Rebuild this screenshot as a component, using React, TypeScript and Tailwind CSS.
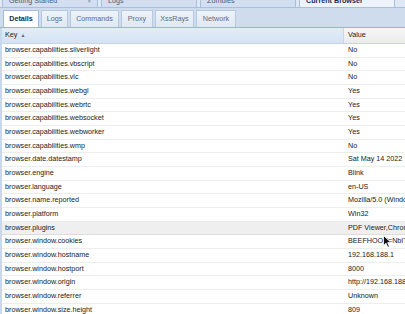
import { ReactNode } from "react";

const outerTabs = [
  { label: "Getting Started", active: false, closable: true },
  { label: "Logs", active: false, closable: false },
  { label: "Zombies", active: false, closable: false },
  { label: "Current Browser", active: true, closable: false },
];

const innerTabs = [
  { label: "Details", w: "w-[36px]" },
  { label: "Logs", w: "w-[27px]" },
  { label: "Commands", w: "w-[49px]" },
  { label: "Proxy", w: "w-[32px]" },
  { label: "XssRays", w: "w-[39px]" },
  { label: "Network", w: "w-[40px]" },
];

const rows: [string, string][] = [
  ["browser.capabilities.silverlight", "No"],
  ["browser.capabilities.vbscript", "No"],
  ["browser.capabilities.vlc", "No"],
  ["browser.capabilities.webgl", "Yes"],
  ["browser.capabilities.webrtc", "Yes"],
  ["browser.capabilities.websocket", "Yes"],
  ["browser.capabilities.webworker", "Yes"],
  ["browser.capabilities.wmp", "No"],
  ["browser.date.datestamp", "Sat May 14 2022 12:41:08 GMT+0200"],
  ["browser.engine", "Blink"],
  ["browser.language", "en-US"],
  ["browser.name.reported", "Mozilla/5.0 (Windows NT 10.0; Win64; x64)"],
  ["browser.platform", "Win32"],
  ["browser.plugins", "PDF Viewer,Chrome PDF Viewer"],
  ["browser.window.cookies", "BEEFHOOK=NbITq8xW"],
  ["browser.window.hostname", "192.168.188.1"],
  ["browser.window.hostport", "8000"],
  ["browser.window.origin", "http://192.168.188.1:8000"],
  ["browser.window.referrer", "Unknown"],
  ["browser.window.size.height", "809"],
];

const Cell = ({ children, className }: { children: ReactNode; className?: string }) => (
  <div className={`flex items-center overflow-hidden whitespace-nowrap ${className ?? ""}`}>{children}</div>
);

export default function App() {
  return (
    <div className="relative h-[314px] w-[405px] overflow-hidden bg-white font-['Liberation_Sans',Arial,sans-serif] text-[7.2px] text-[#222]">
      {/* outer tab bar, scrolled so only bottom half shows */}
      <div className="flex h-[8px] items-end gap-[3px] overflow-hidden border-b border-[#a9c0dc] bg-[#dfe8f6] pl-[2px]">
        {outerTabs.map((t) => (
          <div
            key={t.label}
            className={`flex h-[18px] w-[96px] shrink-0 items-center justify-between border-x border-[#a9c0dc] px-[6px] pt-[6px] ${
              t.active ? "bg-[#eef3fb] font-bold text-[#15305a]" : "bg-[#d3dff0] text-[#4b5d78]"
            }`}
          >
            <span>{t.label}</span>
            {t.closable && <span className="text-[6px] text-[#6d7f99]">×</span>}
          </div>
        ))}
      </div>

      {/* inner tab strip */}
      <div className="flex h-[20px] items-end gap-[2px] border-b border-[#99b4d6] bg-[#cfdcee] pl-[3px]">
        {innerTabs.map((t, i) => (
          <div
            key={t.label}
            className={`${t.w} flex h-[17px] shrink-0 items-center justify-center border-x border-t ${
              i === 0
                ? "border-[#a3bcdc] bg-white font-bold text-[#1b2c48]"
                : "border-[#b7c9e0] bg-gradient-to-b from-[#eef3fa] to-[#dfe8f4] text-[#5b6b82]"
            }`}
          >
            {t.label}
          </div>
        ))}
      </div>

      {/* grid */}
      <div className="flex w-[480px] flex-col border-l-2 border-[#c9d8ec]">
        <div className="flex h-[16px] border-b border-[#c5d3e6]">
          <Cell className="w-[341px] bg-gradient-to-b from-[#e3edf9] to-[#d4e2f4] pl-[3px]">
            Key <span className="ml-[3px] text-[5px] text-[#667]">▲</span>
          </Cell>
          <Cell className="flex-1 border-l border-[#cfd6df] bg-gradient-to-b from-[#f7f7f7] to-[#ebebeb] pl-[4px]">
            Value
          </Cell>
        </div>
        {rows.map(([k, v]) => (
          <div
            key={k}
            className={`flex h-[13.68px] border-b ${
              k === "browser.plugins" ? "border-[#dcdcdc] bg-[#efefef]" : "border-[#ededed] bg-white"
            }`}
          >
            <Cell className="w-[341px] pl-[3px]">{k}</Cell>
            <Cell className="flex-1 pl-[5px]">{v}</Cell>
          </div>
        ))}
      </div>

      {/* mouse pointer */}
      <svg className="absolute left-[383px] top-[235px]" width="9" height="13" viewBox="0 0 9 13">
        <path d="M0.5 0.5 L0.5 10.5 L3 8.2 L4.8 12.3 L6.4 11.6 L4.6 7.6 L8 7.6 Z" fill="#111" stroke="#fff" strokeWidth="0.8" />
      </svg>
    </div>
  );
}
